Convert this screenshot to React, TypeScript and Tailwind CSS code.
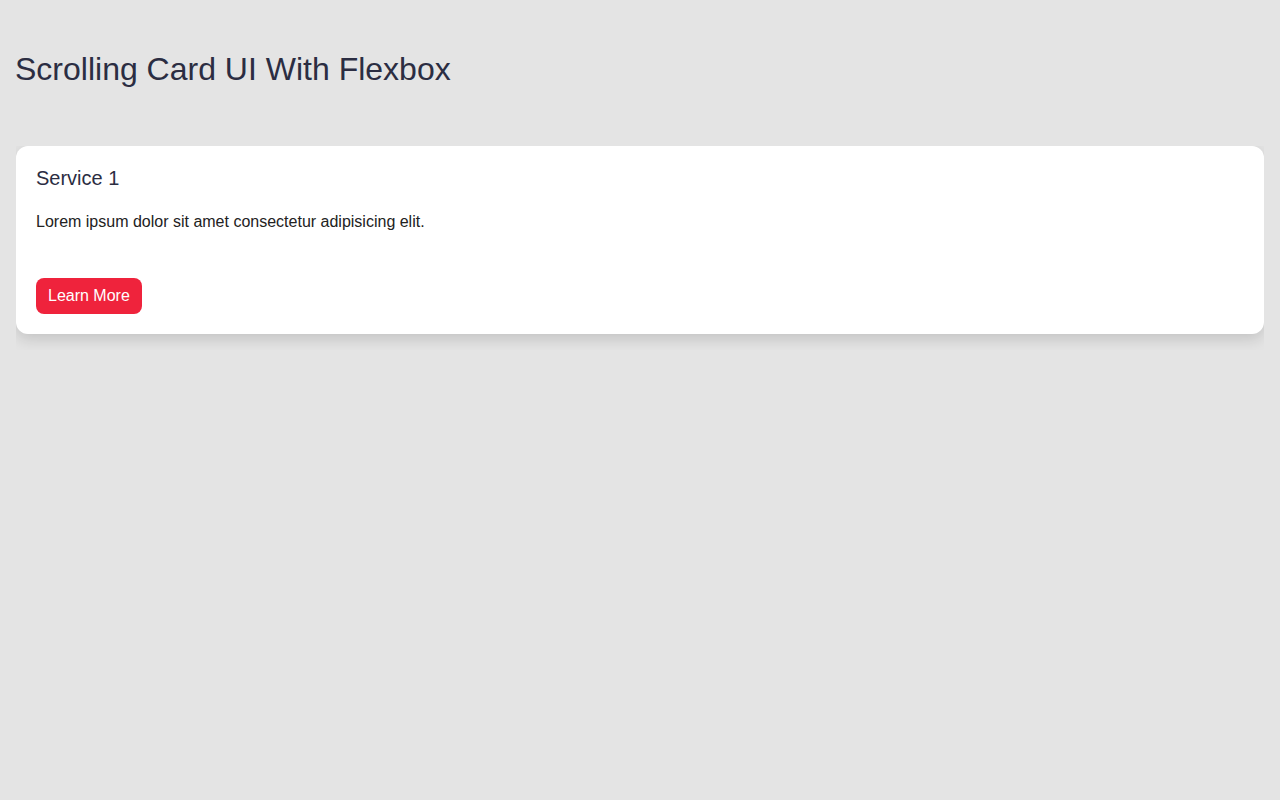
export default function App() {
  return (
    <div className="min-h-screen bg-[#e4e4e4] px-4 pt-[51px] font-['Liberation_Sans',Arial,sans-serif]">
      <h1 className="-ml-px text-[32px] font-normal leading-[37px] text-[#2b2d42]">
        Scrolling Card UI With Flexbox
      </h1>

      <div className="mt-[58px] flex overflow-x-auto pb-4">
        <div className="flex w-full shrink-0 flex-col rounded-xl bg-white px-5 pt-5 pb-5 shadow-[0_5px_15px_rgba(0,0,0,0.15)]">
          <h2 className="text-[20px] font-normal leading-[25px] text-[#2b2d42]">Service 1</h2>
          <p className="mt-[19px] text-base leading-6 text-[#222]">
            Lorem ipsum dolor sit amet consectetur adipisicing elit.
          </p>
          <div className="mt-11">
            <button className="rounded-lg bg-[#ef233c] px-3 pt-1.5 pb-[7px] text-base leading-[23px] text-white">
              Learn More
            </button>
          </div>
        </div>
      </div>
    </div>
  );
}
